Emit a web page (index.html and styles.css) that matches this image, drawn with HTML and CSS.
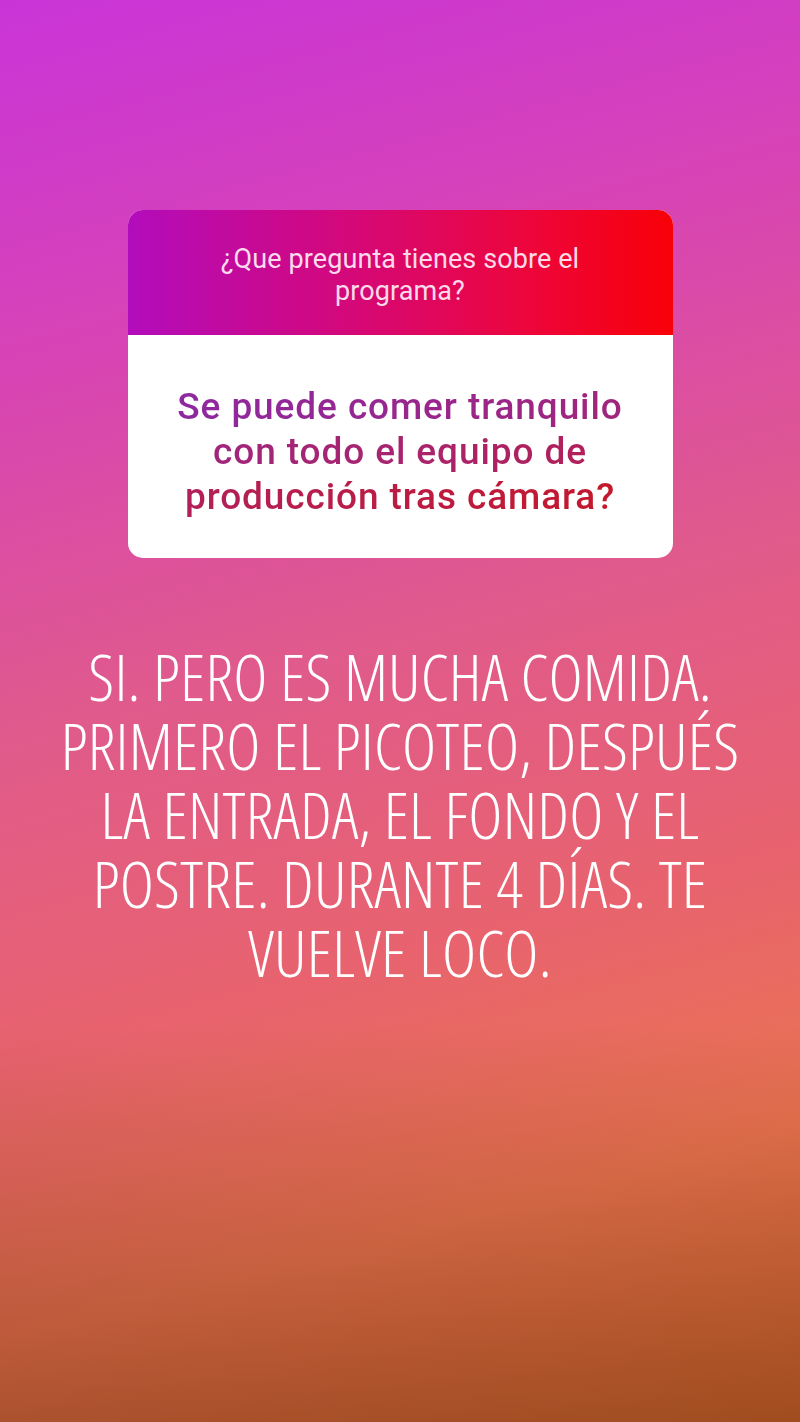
FILE: index.html
```html
<!DOCTYPE html>
<html lang="es">
<head>
<meta charset="utf-8">
<link rel="stylesheet" href="styles.css">
</head>
<body>
<div class="story">
  <div class="card">
    <div class="card-head">¿Que pregunta tienes sobre el<br>programa?</div>
    <div class="card-body"><span class="answer">Se puede comer tranquilo<br>con todo el equipo de<br>producción tras cámara?</span></div>
  </div>
  <p class="reply">SI. PERO ES MUCHA COMIDA.<br>PRIMERO EL PICOTEO, DESPUÉS<br>LA ENTRADA, EL FONDO Y EL<br>POSTRE. DURANTE 4 DÍAS. TE<br>VUELVE LOCO.</p>
</div>
</body>
</html>
```
FILE: styles.css
```css
html, body {
  margin: 0;
  padding: 0;
}
body {
  width: 800px;
  height: 1422px;
  overflow: hidden;
}
.story {
  width: 800px;
  height: 1422px;
  box-sizing: border-box;
  padding-top: 210px;
  background:
    linear-gradient(180deg, rgba(90, 30, 0, 0) 0%, rgba(90, 30, 0, 0) 72%, rgba(90, 35, 10, 0.4) 100%),
    linear-gradient(165deg, #c934d8 0%, #d743b6 22%, #e05a8c 45%, #e8636e 65%, #ea7450 82%, #d0682e 100%);
  display: flex;
  flex-direction: column;
  align-items: center;
  font-family: Roboto, "Noto Sans", sans-serif;
}
.card {
  width: 545px;
  border-radius: 15px;
  overflow: hidden;
  background: #fff;
}
.card-head {
  height: 125px;
  box-sizing: border-box;
  padding: 33px 10px 0;
  background: linear-gradient(90deg, #b20cbc 0%, #d4087a 40%, #ee0538 75%, #f80008 100%);
  color: rgba(255, 232, 245, 0.95);
  font-size: 27px;
  line-height: 32px;
  letter-spacing: 0.1px;
  text-align: center;
}
.card-body {
  height: 223px;
  box-sizing: border-box;
  padding: 49px 10px 0;
  text-align: center;
  font-size: 37px;
  font-weight: 500;
  line-height: 45px;
  letter-spacing: 0.9px;
}
.answer {
  background: linear-gradient(90deg, #8e28a0 0%, #a8246e 50%, #c4182c 100%);
  -webkit-background-clip: text;
  background-clip: text;
  color: transparent;
}
.reply {
  margin: 84px 0 0;
  color: #fff;
  text-align: center;
  font-family: "Open Sans", sans-serif;
  font-stretch: 75%;
  font-weight: 360;
  font-size: 65px;
  line-height: 69px;
  letter-spacing: 0.2px;
}
```
